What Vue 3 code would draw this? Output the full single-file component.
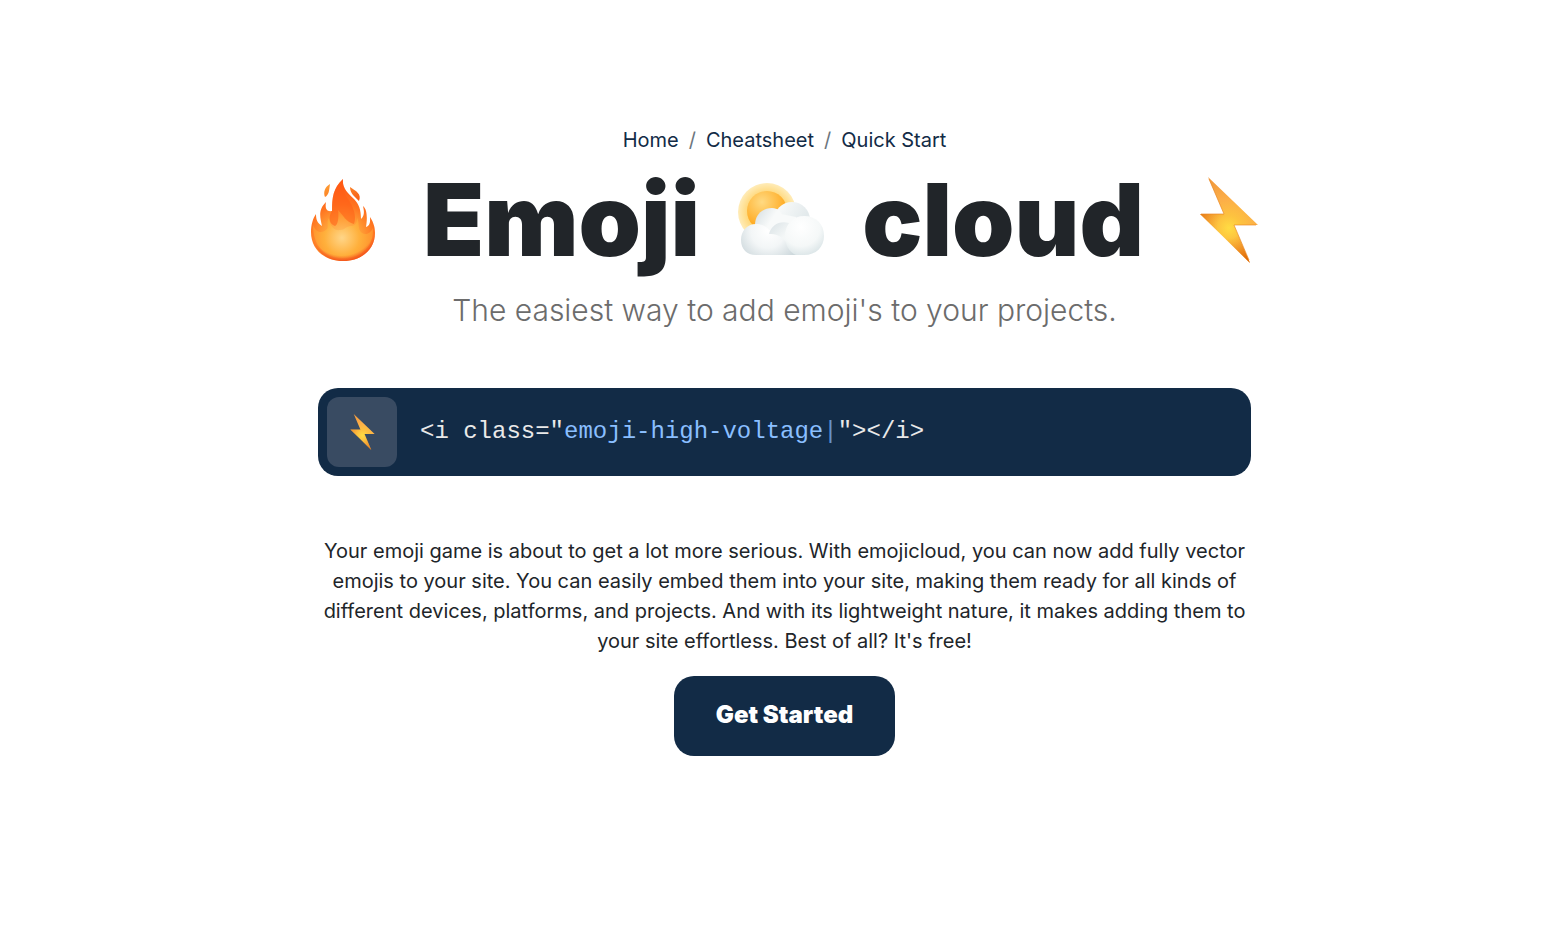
<script setup>
const links = ['Home', 'Cheatsheet', 'Quick Start']
</script>

<template>
  <main class="page">
    <nav aria-label="Breadcrumb">
      <ol class="crumbs">
        <li v-for="link in links" :key="link"><a href="#">{{ link }}</a></li>
      </ol>
    </nav>

    <h1 class="title">
      <svg class="fire" viewBox="0 0 64 82" aria-hidden="true">
        <defs>
          <radialGradient id="fire-body" cx="31" cy="58" r="50" gradientUnits="userSpaceOnUse">
            <stop offset="0" stop-color="#ffc66c" />
            <stop offset=".4" stop-color="#ff9c35" />
            <stop offset=".66" stop-color="#ff7420" />
            <stop offset="1" stop-color="#ff5a16" />
          </radialGradient>
          <radialGradient id="fire-core" cx="31" cy="59" r="32" gradientUnits="userSpaceOnUse">
            <stop offset="0" stop-color="#ffdb92" />
            <stop offset=".55" stop-color="#ffb53c" />
            <stop offset="1" stop-color="#ff9930" />
          </radialGradient>
          <linearGradient id="fire-spark" x1="0" y1="0" x2="1" y2="1">
            <stop offset="0" stop-color="#ffa034" />
            <stop offset="1" stop-color="#f75b16" />
          </linearGradient>
          <radialGradient id="fire-rim" cx="31" cy="42" r="41" gradientUnits="userSpaceOnUse">
            <stop offset=".84" stop-color="#f4501c" stop-opacity="0" />
            <stop offset="1" stop-color="#f04a18" />
          </radialGradient>
        </defs>
        <path fill="url(#fire-body)" d="M32 0C31 9 37 14 43 20C48 25 50 31 50 40C54 37 53 31 52 27C57 31 56 42 55 48C60 46 59 41 59 38C63 44 64 49 64 54C64 71 50 82 32 82C14 82 0 71 0 53C0 46 2 39 5 35C5 40 6 44 11 47C9 38 7 31 15 23C14 29 15 33 21 32C21 19 22 9 32 0Z" />
        <path fill="#ff5c16" opacity=".55" d="M21 32C17 38 18 45 24 47C27 46 28 38 27 31C32 36 35 43 43 45C46 37 42 27 37 20C34 16 31 12 32 0C22 9 21 19 21 32Z" />
        <path fill="url(#fire-core)" opacity=".75" d="M2 46C5 54 11 55 16 50C18 46 15 43 18 39C19 48 24 52 29 51C34 51 35 47 40 47C45 47 46 43 46 39C49 44 46 50 51 54C56 57 60 53 62 49C63 67 51 79 32 79C13 79 2 66 2 46Z" />
        <path fill="url(#fire-rim)" d="M0 48C0 70 14 82 32 82C50 82 64 71 64 54C64 50 63 46 62 44C64 65 49 74 32 74C15 74 3 64 0 48Z" />
        <path fill="url(#fire-spark)" d="M19 5C14 8 12 13 14 18C18 16 18 12 19 5ZM39 8C39 14 43 17 48 22C51 15 45 12 39 8Z" />
      </svg>
      <span>Emoji</span>
      <svg class="cloud" viewBox="0 0 86 74" aria-hidden="true">
        <defs>
          <radialGradient id="sun-halo" cx="29" cy="29" r="29" gradientUnits="userSpaceOnUse">
            <stop offset=".65" stop-color="#ffd777" />
            <stop offset="1" stop-color="#ffecb9" />
          </radialGradient>
          <radialGradient id="sun-face" cx="24" cy="19" r="25" gradientUnits="userSpaceOnUse">
            <stop offset="0" stop-color="#ffda82" />
            <stop offset="1" stop-color="#ffa91f" />
          </radialGradient>
          <linearGradient id="puff-back" x1="17" y1="30" x2="42" y2="46" gradientUnits="userSpaceOnUse">
            <stop offset="0" stop-color="#d9e1e4" />
            <stop offset=".6" stop-color="#f8fafa" />
          </linearGradient>
          <linearGradient id="puff-top" x1="42" y1="22" x2="66" y2="36" gradientUnits="userSpaceOnUse">
            <stop offset="0" stop-color="#f8fafa" />
            <stop offset="1" stop-color="#e3eaec" />
          </linearGradient>
          <radialGradient id="puff-left" cx="30" cy="48" r="34" gradientUnits="userSpaceOnUse">
            <stop offset="0" stop-color="#ffffff" />
            <stop offset=".5" stop-color="#f3f6f7" />
            <stop offset="1" stop-color="#cdd8dc" />
          </radialGradient>
          <linearGradient id="puff-inner" x1="32" y1="42" x2="50" y2="60" gradientUnits="userSpaceOnUse">
            <stop offset="0" stop-color="#dce4e7" />
            <stop offset=".7" stop-color="#f4f7f7" />
          </linearGradient>
          <radialGradient id="puff-right" cx="63" cy="44" r="32" gradientUnits="userSpaceOnUse">
            <stop offset="0" stop-color="#ffffff" />
            <stop offset=".6" stop-color="#f5f8f8" />
            <stop offset="1" stop-color="#d4e0e3" />
          </radialGradient>
        </defs>
        <circle cx="29" cy="29" r="29" fill="url(#sun-halo)" />
        <circle cx="29" cy="28" r="20" fill="url(#sun-face)" />
        <circle cx="54" cy="37" r="18" fill="url(#puff-top)" />
        <path fill="url(#puff-back)" d="M17 42C17 32 24 25 34 25C37 25 39 26 41 27C46 34 50 46 50 60H20Z" />
        <path fill="#f8fafa" d="M38 30L58 34V58H30Z" />
        <path fill="url(#puff-left)" d="M18 41C23 41 28 43 31 47C39 46 47 49 52 54L64 72H18C9 72 3 66 3 57C3 48 9 41 18 41Z" />
        <path fill="url(#puff-inner)" d="M31 51C33 42 42 37 51 40L60 52L52 66C48 56 40 50 31 51Z" />
        <path fill="url(#puff-right)" d="M66 33C78 33 86 41 86 53C86 64 78 72 66 72H58C51 69 47 62 47 53C47 41 55 33 66 33Z" />
      </svg>
      <span>cloud</span>
      <svg class="bolt" viewBox="0 0 58 86" aria-hidden="true">
        <defs>
          <radialGradient id="bolt-fill" cx="29" cy="51" r="48" gradientUnits="userSpaceOnUse">
            <stop offset="0" stop-color="#ffdc43" />
            <stop offset=".25" stop-color="#fdc33f" />
            <stop offset=".6" stop-color="#fcae48" />
            <stop offset="1" stop-color="#f39c3e" />
          </radialGradient>
          <radialGradient id="bolt-shade" cx="29" cy="50" r="38" gradientUnits="userSpaceOnUse">
            <stop offset=".3" stop-color="#e77b0b" stop-opacity="0" />
            <stop offset="1" stop-color="#dc6500" />
          </radialGradient>
        </defs>
        <path fill="url(#bolt-fill)" d="M8 0L58 48L34 48L50 86L0 37L24 37Z" />
        <path fill="url(#bolt-shade)" d="M0 37L50 86L34 48L24 37Z" />
        <path fill="none" stroke="#e98622" opacity=".65" d="M9 2L24 37L1 37M56 48L34 48L49 83" />
      </svg>
    </h1>

    <p class="lead">The easiest way to add emoji's to your projects.</p>

    <div class="demo">
      <div class="tile">
        <svg viewBox="0 0 58 86" aria-hidden="true">
          <path fill="url(#bolt-fill)" d="M8 0L58 48L34 48L50 86L0 37L24 37Z" />
          <path fill="url(#bolt-shade)" opacity=".6" d="M0 37L50 86L34 48L24 37Z" />
        </svg>
      </div>
      <code>&lt;i class="<span class="name">emoji-high-voltage<span class="caret">|</span></span>"&gt;&lt;/i&gt;</code>
    </div>

    <p class="about">
      Your emoji game is about to get a lot more serious. With emojicloud, you can now add fully vector
      emojis to your site. You can easily embed them into your site, making them ready for all kinds of
      different devices, platforms, and projects. And with its lightweight nature, it makes adding them to
      your site effortless. Best of all? It's free!
    </p>

    <button class="start" type="button">Get Started</button>
  </main>
</template>

<style>
body {
  margin: 0;
  background: #fff;
}
</style>

<style scoped>
.page {
  box-sizing: border-box;
  display: flex;
  flex-direction: column;
  align-items: center;
  padding: 125px 16px 48px 20px;
  font-family: Inter, "Liberation Sans", sans-serif;
  font-size: 20px;
  font-weight: 400;
  line-height: 30px;
  color: #212529;
}
.crumbs {
  display: flex;
  margin: 0;
  padding: 0;
  list-style: none;
}
.crumbs li + li::before {
  content: "/";
  padding: 0 10px;
  color: #6c757d;
}
.crumbs a {
  color: #122b46;
  text-decoration: none;
}
.title {
  display: flex;
  align-items: center;
  justify-content: center;
  margin: 0;
  font-size: 100px;
  font-weight: 900;
  line-height: 130px;
}
.title svg {
  flex: none;
}
.fire {
  width: 64px;
  height: 82px;
  margin-right: 48px;
}
.cloud {
  width: 86px;
  height: 74px;
  margin: 0 38px;
}
.bolt {
  width: 58px;
  height: 86px;
  margin-left: 56px;
}
.lead {
  margin: 0;
  font-size: 30px;
  font-weight: 300;
  line-height: 50px;
  color: #6c6c6c;
}
.demo {
  box-sizing: border-box;
  display: flex;
  align-items: center;
  gap: 23px;
  width: 100%;
  max-width: 933px;
  margin: 53px 0 60px;
  padding: 9px;
  border-radius: 20px;
  background: #122b46;
}
.tile {
  display: flex;
  align-items: center;
  justify-content: center;
  width: 70px;
  height: 70px;
  border-radius: 12px;
  background: #394b62;
}
.tile svg {
  width: 25px;
  height: 36px;
}
code {
  font-family: "Liberation Mono", monospace;
  font-size: 24px;
  font-weight: 400;
  color: #e9e9e9;
}
.name {
  color: #8abfff;
}
.caret {
  opacity: .7;
}
.about {
  max-width: 933px;
  margin: 0 0 20px;
  text-align: center;
}
.start {
  padding: 24px 42px 26px;
  border: 0;
  border-radius: 20px;
  background: #122b46;
  font: 900 24px/30px Inter, "Liberation Sans", sans-serif;
  color: #fff;
  cursor: pointer;
}
</style>
